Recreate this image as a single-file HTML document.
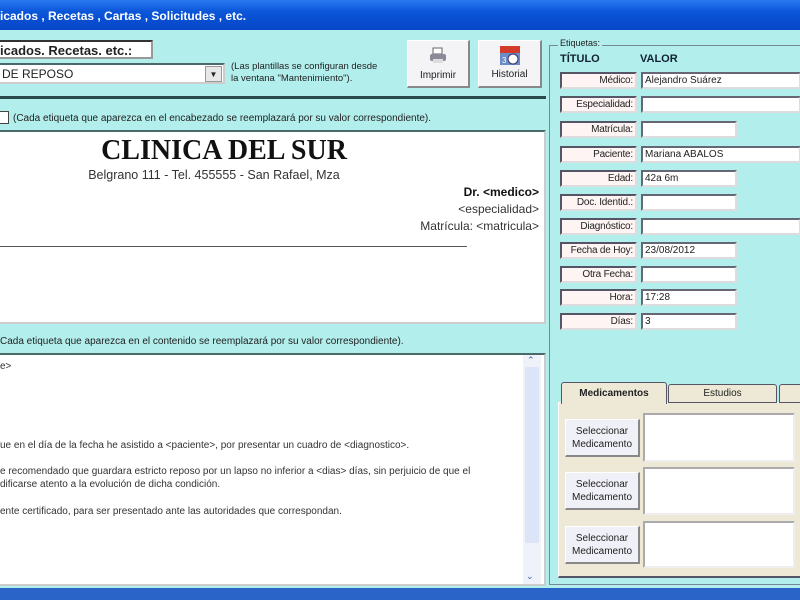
<!DOCTYPE html>
<html><head><meta charset="utf-8"><style>
*{box-sizing:border-box;margin:0;padding:0}
body{width:800px;height:600px;overflow:hidden;background:#b2eeec;font-family:"Liberation Sans",sans-serif;font-size:10px;color:#222;position:relative}
.a{position:absolute;white-space:nowrap}
.title{left:0;top:0;width:800px;height:30px;background:linear-gradient(#2a78f0,#0a55d8 40%,#0846c8);color:#fff;font-weight:bold;font-size:12px;padding:9px 0 0 0}
.box{background:#fff;border:2px solid #4a6a6a;border-right-color:#ccc;border-bottom-color:#ccc}
.btn{background:#f4f4f6;border:1px solid #fff;border-right:2px solid #888;border-bottom:2px solid #888;text-align:center}
.lbl{position:absolute;left:560px;width:77px;height:17px;background:#fff4f4;border:2px solid #556;border-right-color:#ddd;border-bottom-color:#ddd;text-align:right;font-size:10px;padding:1px 2px 0 0;letter-spacing:-0.2px}
.val{position:absolute;left:641px;height:17px;background:#fff;border:2px solid #667;border-right-color:#ddd;border-bottom-color:#ddd;font-size:10px;padding:1px 0 0 2px}
.ta{position:absolute;left:643px;width:152px;background:#fff;border:2px solid #aaa;border-right-color:#eee;border-bottom-color:#eee}
</style></head><body>
<div class="a title">icados , Recetas , Cartas , Solicitudes , etc.</div>

<div class="a" style="left:0;top:40px;width:153px;height:19px;background:#fff;border:2px solid #333;border-left:none;border-right-color:#999;border-bottom-color:#999;font-weight:bold;font-size:13px;padding:1px 0 0 0">icados. Recetas. etc.:</div>
<div class="a box" style="left:0;top:63px;width:225px;height:21px;font-size:12px;padding:2px 0 0 2px;border-left:none">DE REPOSO</div>
<div class="a" style="left:205px;top:66px;width:17px;height:16px;background:#e8e8e8;border:1px solid #999;font-size:8px;text-align:center;line-height:15px">▼</div>
<div class="a" style="left:231px;top:61px;font-size:9.5px;line-height:12px">(Las plantillas se configuran desde<br>la ventana "Mantenimiento").</div>

<div class="a btn" style="left:407px;top:40px;width:63px;height:48px"><svg width="20" height="18" style="margin-top:6px"><rect x="5" y="1" width="9" height="6" fill="#fff" stroke="#666"/><rect x="2" y="7" width="16" height="7" rx="2" fill="#8a8a9a"/><rect x="5" y="12" width="10" height="4" fill="#ddd"/></svg><div style="font-size:10px;margin-top:2px">Imprimir</div></div>
<div class="a btn" style="left:478px;top:40px;width:64px;height:48px"><svg width="24" height="22" style="margin-top:3px"><rect x="2" y="2" width="20" height="7" fill="#d23a2a"/><rect x="2" y="9" width="20" height="12" fill="#6c8cc8"/><circle cx="15" cy="15" r="5" fill="#fff" stroke="#336"/><text x="4" y="19" font-size="8" fill="#fff">3</text></svg><div style="font-size:10px">Historial</div></div>

<div class="a" style="left:0;top:96px;width:546px;height:3px;background:#2a4a4a"></div>
<div class="a" style="left:0;top:111px;width:9px;height:13px;background:#fff;border:1px solid #444;border-left:none"></div>
<div class="a" style="left:13px;top:113px;font-size:10px">(Cada etiqueta que aparezca en el encabezado se reemplazará por su valor correspondiente).</div>

<div class="a box" style="left:0;top:130px;width:546px;height:194px;border-left:none">
<div class="a" style="left:0;width:448px;top:3px;text-align:center;font-family:'Liberation Serif',serif;font-weight:bold;font-size:28px;color:#111">CLINICA DEL SUR</div>
<div class="a" style="left:0;width:428px;top:36px;text-align:center;font-size:12.5px;color:#333">Belgrano 111 - Tel. 455555 - San Rafael, Mza</div>
<div class="a" style="right:5px;top:52px;text-align:right;font-size:12px;line-height:17px;color:#333"><b style="color:#111">Dr. &lt;medico&gt;</b><br>&lt;especialidad&gt;<br>Matrícula: &lt;matricula&gt;</div>
<div class="a" style="left:0;top:114px;width:467px;height:1px;background:#555"></div>
</div>

<div class="a" style="left:0;top:336px;font-size:10px">Cada etiqueta que aparezca en el contenido se reemplazará por su valor correspondiente).</div>
<div class="a box" style="left:0;top:353px;width:546px;height:233px;border-left:none;font-size:10px;color:#333">
<div class="a" style="left:0;top:6px">e&gt;</div>
<div class="a" style="left:0;top:85px">ue en el día de la fecha he asistido a &lt;paciente&gt;, por presentar un cuadro de &lt;diagnostico&gt;.</div>
<div class="a" style="left:0;top:111px">e recomendado que guardara estricto reposo por un lapso no inferior a &lt;dias&gt; días, sin perjuicio de que el</div>
<div class="a" style="left:0;top:124px">dificarse atento a la evolución de dicha condición.</div>
<div class="a" style="left:0;top:151px">ente certificado, para ser presentado ante las autoridades que correspondan.</div>
<div class="a" style="left:523px;top:0;width:18px;height:229px;background:#f0f2fa"><div style="position:absolute;top:12px;left:2px;width:14px;height:176px;background:#dce4f8;border-radius:2px"></div><div style="position:absolute;top:0;left:4px;color:#4060b0;font-size:9px">⌃</div><div style="position:absolute;bottom:2px;left:3px;color:#4060b0;font-size:9px">⌄</div></div>
</div>
<div class="a" style="left:0;top:588px;width:800px;height:12px;background:#2a64c8"></div>

<div class="a" style="left:549px;top:45px;width:260px;height:540px;border:1px solid #789;border-right:none"></div>
<div class="a" style="left:558px;top:38px;background:#b2eeec;padding:0 2px;font-size:9px">Etiquetas:</div>
<div class="a" style="left:560px;top:53px;font-weight:bold;font-size:11px;color:#123">TÍTULO</div>
<div class="a" style="left:640px;top:53px;font-weight:bold;font-size:11px;color:#123">VALOR</div>

<div class="lbl" style="top:72px">Médico:</div><div class="val" style="top:72px;width:160px">Alejandro Suárez</div>
<div class="lbl" style="top:96px">Especialidad:</div><div class="val" style="top:96px;width:160px"></div>
<div class="lbl" style="top:121px">Matrícula:</div><div class="val" style="top:121px;width:96px"></div>
<div class="lbl" style="top:146px">Paciente:</div><div class="val" style="top:146px;width:160px">Mariana ABALOS</div>
<div class="lbl" style="top:170px">Edad:</div><div class="val" style="top:170px;width:96px">42a 6m</div>
<div class="lbl" style="top:194px">Doc. Identid.:</div><div class="val" style="top:194px;width:96px"></div>
<div class="lbl" style="top:218px">Diagnóstico:</div><div class="val" style="top:218px;width:160px"></div>
<div class="lbl" style="top:242px">Fecha de Hoy:</div><div class="val" style="top:242px;width:96px">23/08/2012</div>
<div class="lbl" style="top:266px">Otra Fecha:</div><div class="val" style="top:266px;width:96px"></div>
<div class="lbl" style="top:289px">Hora:</div><div class="val" style="top:289px;width:96px">17:28</div>
<div class="lbl" style="top:313px">Días:</div><div class="val" style="top:313px;width:96px">3</div>

<div class="a" style="left:558px;top:402px;width:250px;height:176px;background:#ede9d6;border:1px solid #fff;border-bottom:2px solid #556"></div>
<div class="a" style="left:561px;top:382px;width:106px;height:22px;background:#ede9d6;border:1px solid #556;border-bottom:none;border-radius:3px 3px 0 0;font-weight:bold;font-size:10px;text-align:center;padding-top:5px">Medicamentos</div>
<div class="a" style="left:668px;top:384px;width:109px;height:19px;background:#ede9d6;border:1px solid #556;border-radius:3px 3px 0 0;font-size:10px;text-align:center;padding-top:3px">Estudios</div>
<div class="a" style="left:779px;top:384px;width:30px;height:19px;background:#ede9d6;border:1px solid #556;border-radius:3px 3px 0 0"></div>

<div class="a btn" style="left:565px;top:419px;width:75px;height:38px;font-size:10px;line-height:13px;padding-top:5px;background:#f0f0f8">Seleccionar<br>Medicamento</div>
<div class="a btn" style="left:565px;top:472px;width:75px;height:38px;font-size:10px;line-height:13px;padding-top:5px;background:#f0f0f8">Seleccionar<br>Medicamento</div>
<div class="a btn" style="left:565px;top:526px;width:75px;height:38px;font-size:10px;line-height:13px;padding-top:5px;background:#f0f0f8">Seleccionar<br>Medicamento</div>
<div class="ta" style="top:413px;height:49px"></div>
<div class="ta" style="top:467px;height:48px"></div>
<div class="ta" style="top:521px;height:47px"></div>
</body></html>
